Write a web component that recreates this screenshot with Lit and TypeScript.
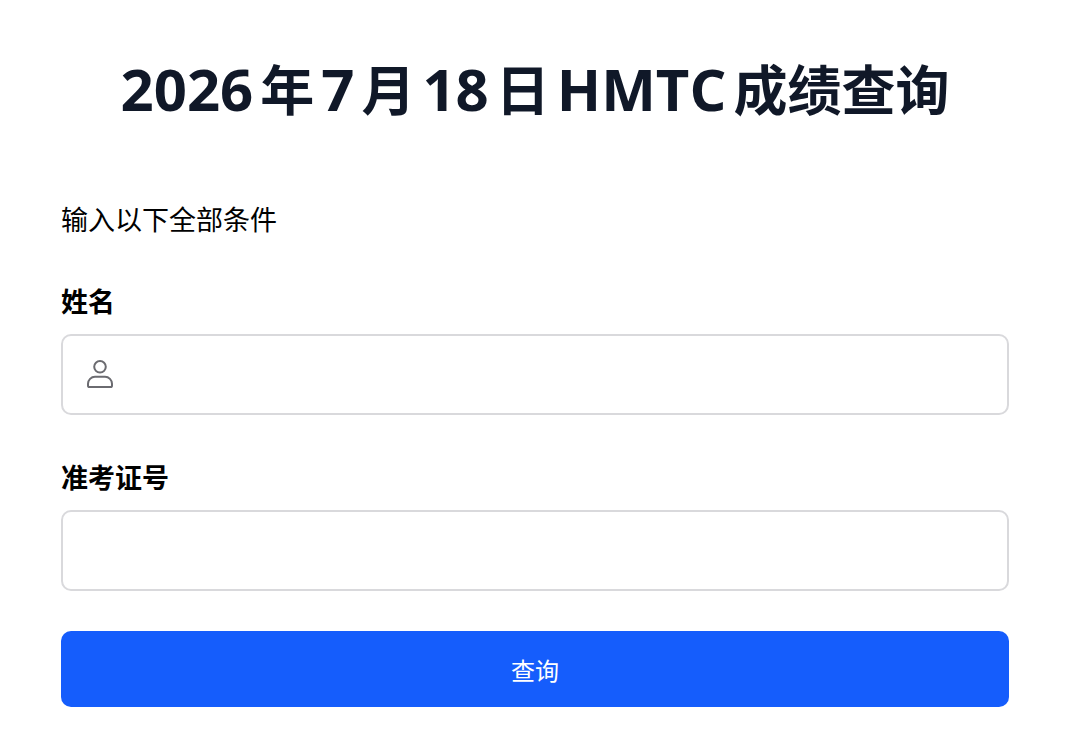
import { LitElement, html, css } from "lit";
import { customElement } from "lit/decorators.js";

@customElement("app-root")
export class AppRoot extends LitElement {
  static styles = css`
    :host {
      display: block;
      box-sizing: border-box;
      min-height: 100vh;
      padding: 46px 71px 46px 61px;
      background: #fff;
      color: #000;
      font-family: "Open Sans", "Noto Sans CJK SC", sans-serif;
    }
    .title {
      margin: 0 0 66px;
      color: #101828;
      font-size: 54px;
      line-height: 88px;
      font-weight: 700;
      text-align: center;
      white-space: nowrap;
    }
    .latin {
      margin: 0 7px;
      font-size: 58px;
      line-height: 1;
    }
    .latin:first-child {
      margin-left: 0;
    }
    .hint {
      margin: 0 0 42px;
      font-size: 27px;
      line-height: 40px;
    }
    .form {
      display: flex;
      flex-direction: column;
    }
    .fields {
      display: flex;
      flex-direction: column;
      gap: 43px;
      margin-bottom: 40px;
    }
    .field {
      display: flex;
      flex-direction: column;
      gap: 12px;
    }
    .label {
      font-size: 27px;
      line-height: 40px;
      font-weight: 700;
    }
    .box {
      display: flex;
      align-items: center;
      box-sizing: border-box;
      height: 81px;
      padding: 0 24px;
      gap: 16px;
      border: 2px solid #d9d9dc;
      border-radius: 10px;
    }
    .icon {
      flex: none;
      width: 26px;
      height: 29px;
    }
    .input {
      flex: 1;
      min-width: 0;
      height: 100%;
      padding: 0;
      border: 0;
      outline: 0;
      background: transparent;
      font: inherit;
      font-size: 27px;
    }
    .submit {
      height: 76px;
      padding: 0;
      border: 0;
      border-radius: 10px;
      background: #155dfc;
      color: #fff;
      font: inherit;
      font-size: 24px;
    }
  `;

  render() {
    return html`
      <h1 class="title"><span class="latin">2026</span>年<span class="latin">7</span>月<span class="latin">18</span>日<span class="latin">HMTC</span>成绩查询</h1>
      <form class="form" @submit=${(e: Event) => e.preventDefault()}>
        <p class="hint">输入以下全部条件</p>
        <div class="fields">
          <div class="field">
            <label class="label" for="name">姓名</label>
            <div class="box">
              <svg class="icon" viewBox="0 0 26 29" fill="none" stroke="#6b6b70" stroke-width="2" stroke-linejoin="round" aria-hidden="true">
                <circle cx="13" cy="6.8" r="5.8" />
                <path d="M8 16.8h10a7 7 0 0 1 7 7v1.7a1.6 1.6 0 0 1-1.6 1.6H2.6A1.6 1.6 0 0 1 1 25.5v-1.7a7 7 0 0 1 7-7z" />
              </svg>
              <input class="input" id="name" type="text" />
            </div>
          </div>
          <div class="field">
            <label class="label" for="ticket">准考证号</label>
            <div class="box"><input class="input" id="ticket" type="text" /></div>
          </div>
        </div>
        <button class="submit" type="submit">查询</button>
      </form>
    `;
  }
}
